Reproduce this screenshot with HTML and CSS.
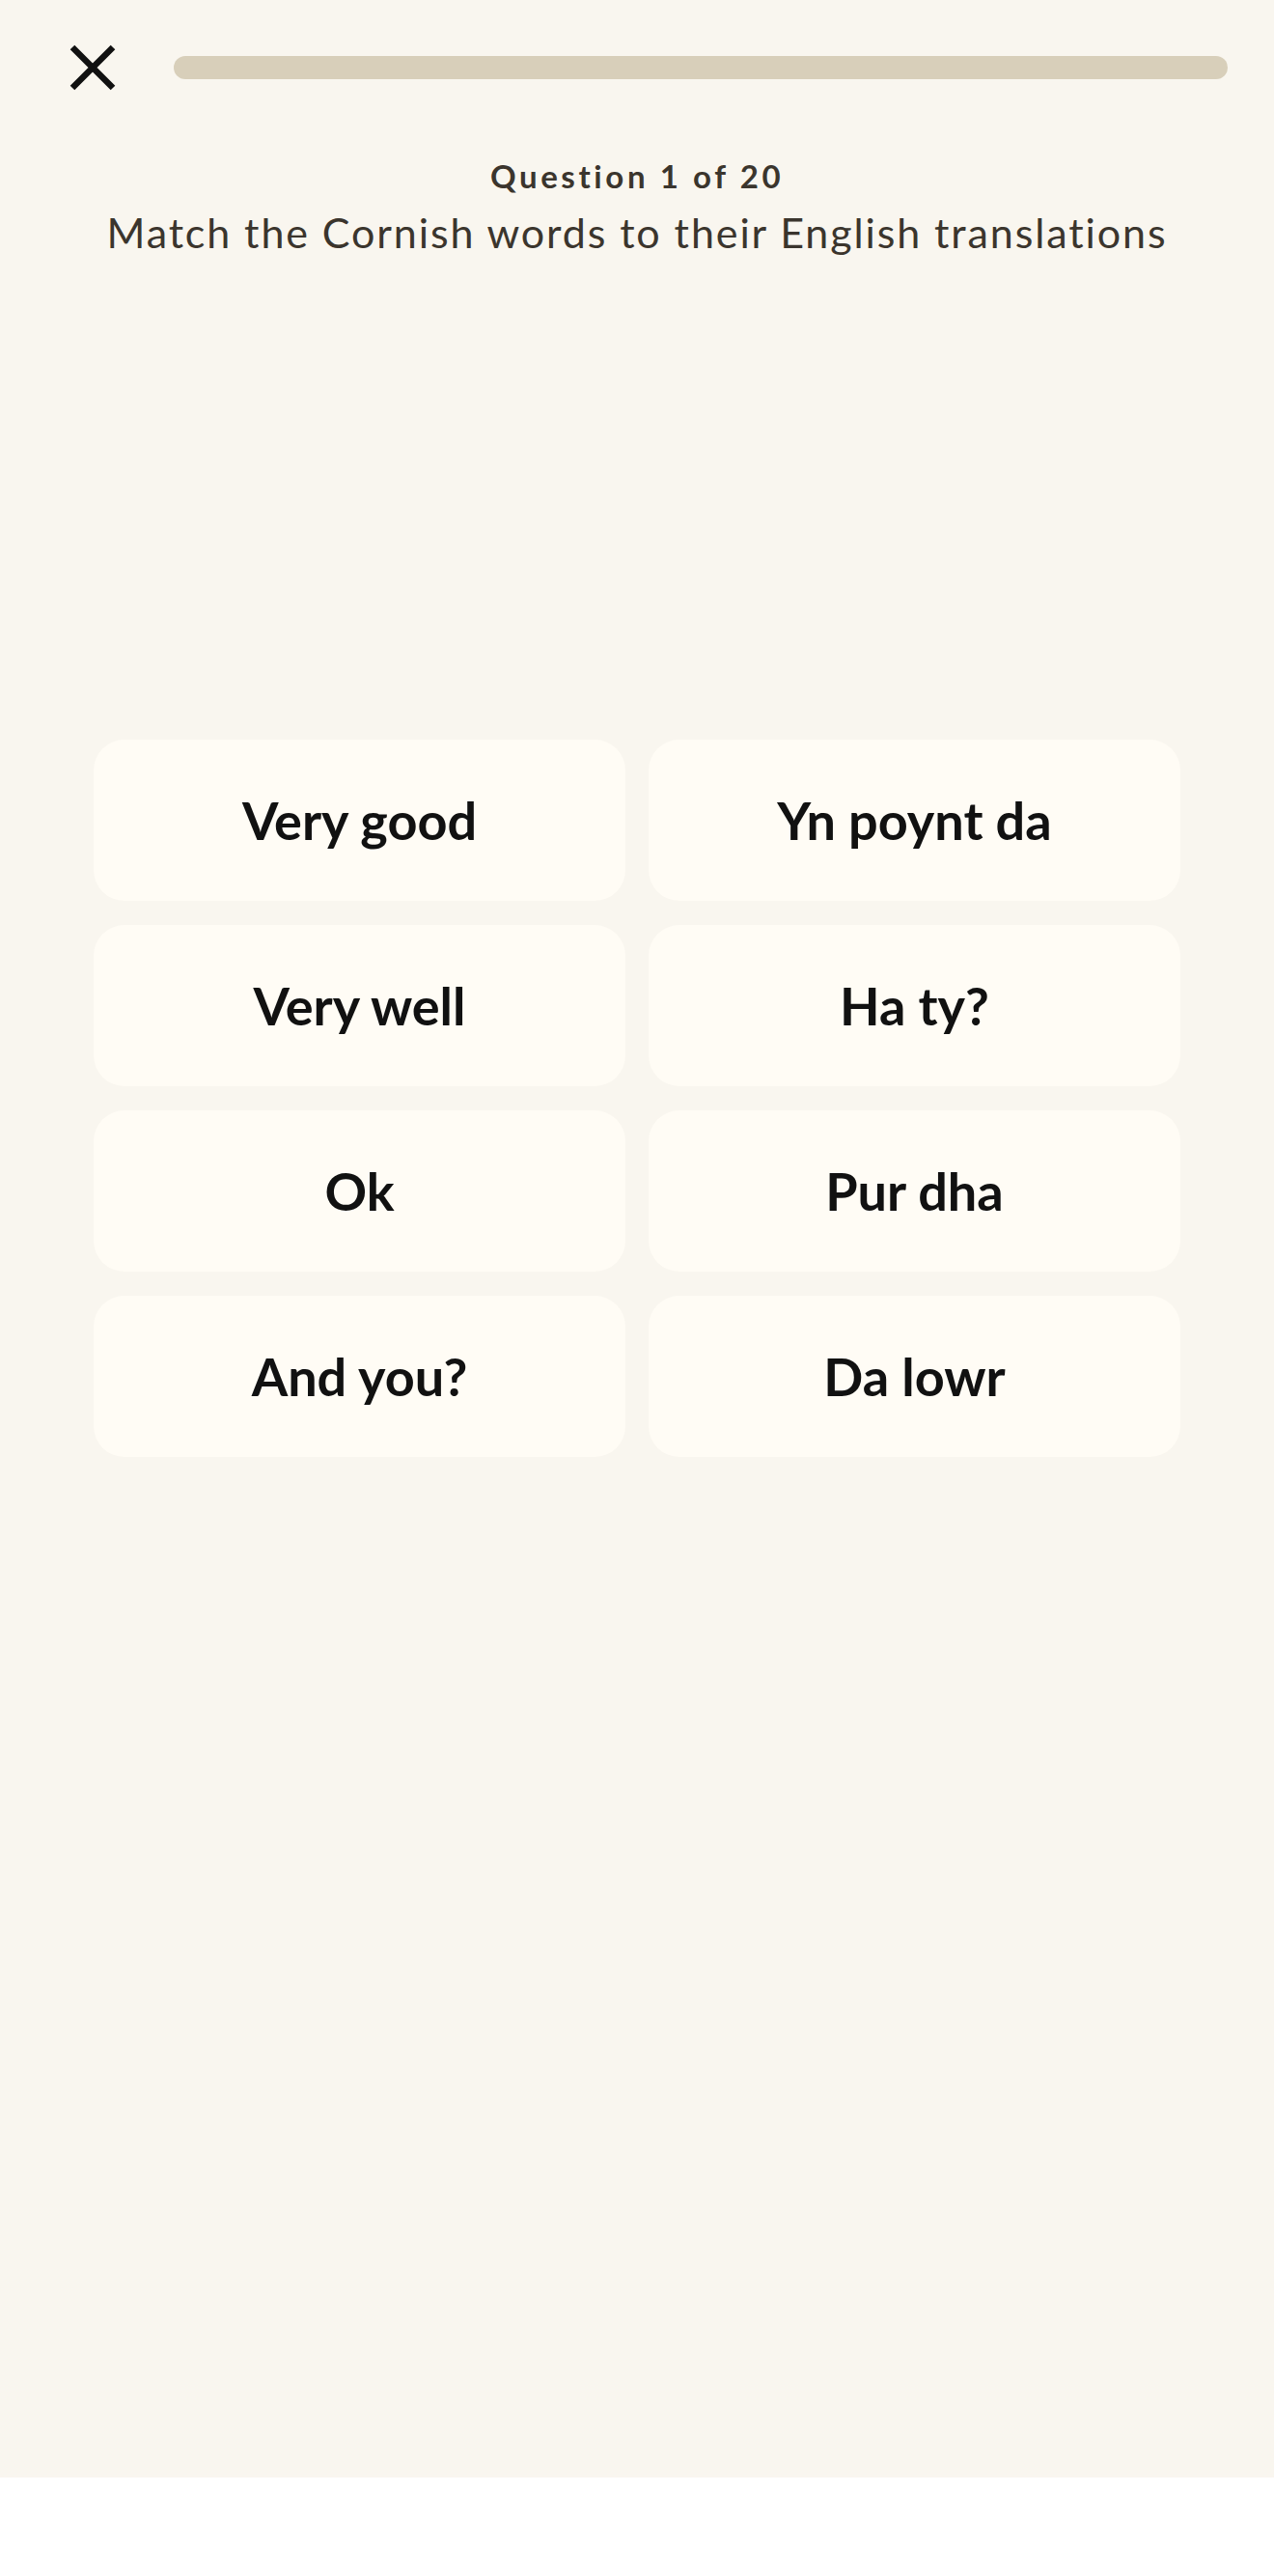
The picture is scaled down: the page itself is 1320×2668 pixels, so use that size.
FILE: index.html
```html
<!DOCTYPE html>
<html lang="en">
<head>
<meta charset="UTF-8">
<meta name="viewport" content="width=device-width, initial-scale=1.0">
<title>Match the words</title>
<link rel="stylesheet" href="styles.css">
</head>
<body>
<div class="app">
    <div class="topbar">
        <button class="close" aria-label="Close">
            <svg viewBox="0 0 48 48" width="48" height="48">
                <path d="M3 3 L45 45 M45 3 L3 45" stroke="#111" stroke-width="6.5" fill="none"/>
            </svg>
        </button>
        <div class="progress"><div class="progress-fill" style="width: 0%"></div></div>
    </div>
    <div class="prompt">
        <div class="question">Question 1 of 20</div>
        <div class="instruction">Match the Cornish words to their English translations</div>
    </div>
    <div class="pairs">
        <button class="word">Very good</button>
        <button class="word">Yn poynt da</button>
        <button class="word">Very well</button>
        <button class="word">Ha ty?</button>
        <button class="word">Ok</button>
        <button class="word">Pur dha</button>
        <button class="word">And you?</button>
        <button class="word">Da lowr</button>
    </div>
</div>
</body>
</html>
```

FILE: styles.css
```css
body {
    margin: 0;
    background-color: #fff;
    font-family: Lato, "Noto Sans", sans-serif;
}

.app {
    min-height: 2566px;
    background-color: #f9f6ef;
}

.topbar {
    display: flex;
    align-items: center;
    gap: 60px;
    height: 48px;
    padding: 46px 48px 0 72px;
}

.close {
    display: flex;
    width: 48px;
    height: 48px;
    padding: 0;
    border: none;
    background: none;
    cursor: pointer;
}

.progress {
    flex: 1;
    height: 24px;
    border-radius: 12px;
    background-color: #d8cfba;
    overflow: hidden;
}

.progress-fill {
    height: 100%;
    background-color: #8a7b5c;
}

.prompt {
    margin-top: 68px;
    text-align: center;
    color: #3b352d;
}

.question {
    font-size: 33px;
    font-weight: 700;
    line-height: 40px;
    letter-spacing: 3.6px;
}

.instruction {
    margin-top: 13px;
    font-size: 43px;
    line-height: 52px;
    letter-spacing: 1.9px;
}

.pairs {
    display: grid;
    grid-template-columns: 551px 551px;
    grid-auto-rows: 167px;
    column-gap: 24px;
    row-gap: 25px;
    justify-content: center;
    margin-top: 499px;
}

.word {
    display: flex;
    align-items: center;
    justify-content: center;
    border: none;
    border-radius: 32px;
    background-color: #fffcf5;
    font-family: inherit;
    font-size: 54px;
    font-weight: 700;
    color: #111;
    cursor: pointer;
}
```
